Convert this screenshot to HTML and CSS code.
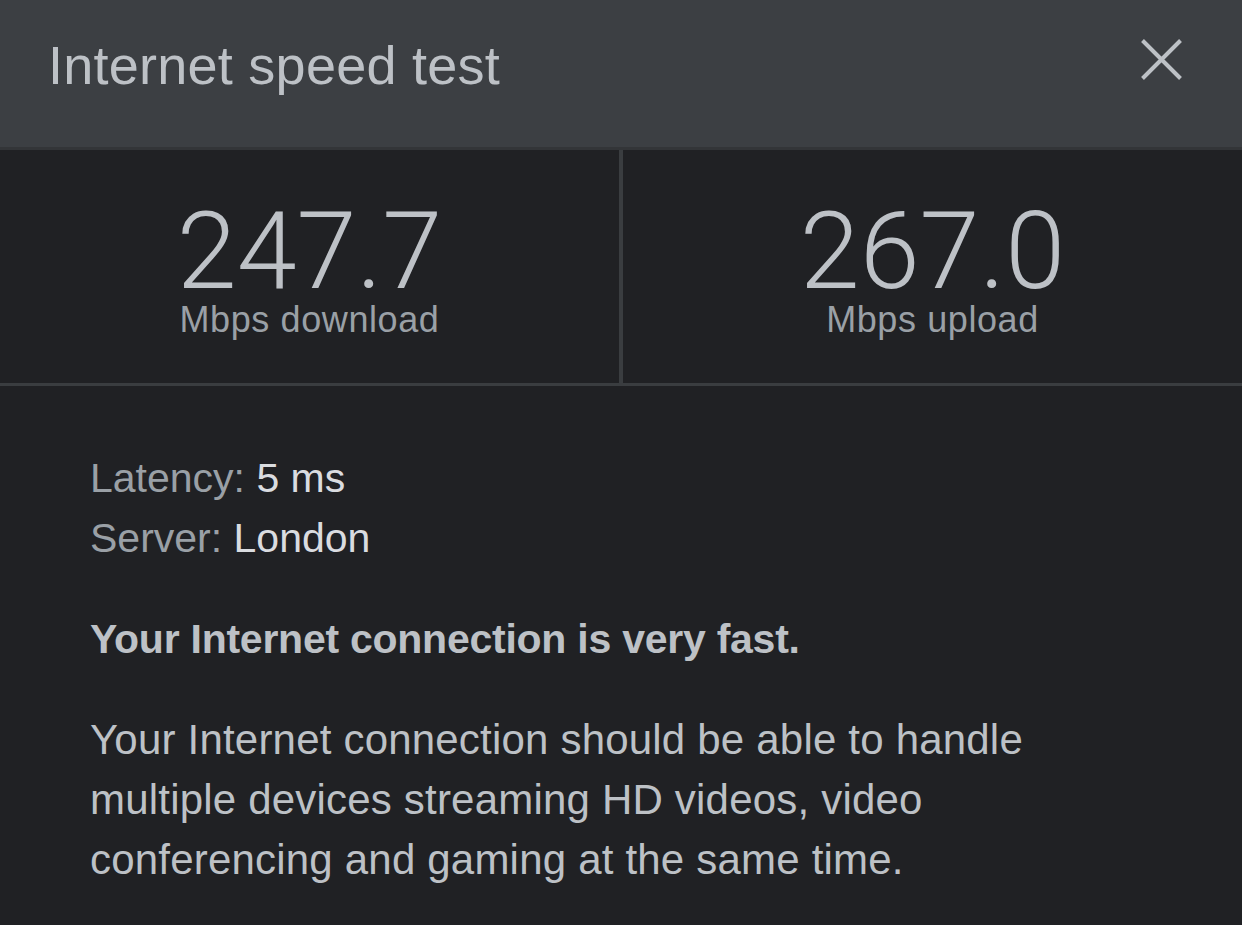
FILE: index.html
```html
<!DOCTYPE html>
<html lang="en">
<head>
<meta charset="utf-8">
<title>Internet speed test</title>
<link rel="stylesheet" href="styles.css">
</head>
<body>
<div class="panel">
  <header class="header">
    <h1 class="title">Internet speed test</h1>
    <button class="close" aria-label="Close">
      <svg width="41" height="41" viewBox="0 0 41 41"><path d="M1.5 1.5 L39.5 39.5 M39.5 1.5 L1.5 39.5" stroke="#bdc1c6" stroke-width="4" fill="none"/></svg>
    </button>
  </header>
  <section class="metrics">
    <div class="metric metric-left">
      <div class="value">247.7</div>
      <div class="unit">Mbps download</div>
    </div>
    <div class="metric">
      <div class="value">267.0</div>
      <div class="unit">Mbps upload</div>
    </div>
  </section>
  <section class="details">
    <div class="info">
      <div class="row"><span class="label">Latency:</span> <span class="val">5 ms</span></div>
      <div class="row"><span class="label">Server:</span> <span class="val">London</span></div>
    </div>
    <p class="verdict">Your Internet connection is very fast.</p>
    <p class="desc">Your Internet connection should be able to handle multiple devices streaming HD videos, video conferencing and gaming at the same time.</p>
  </section>
</div>
</body>
</html>
```
FILE: styles.css
```css
html, body {
  margin: 0;
  padding: 0;
  background: #202124;
}
body {
  font-family: "Liberation Sans", Arial, sans-serif;
  color: #bdc1c6;
}
.panel {
  width: 1242px;
  height: 925px;
  overflow: hidden;
}
.header {
  box-sizing: border-box;
  height: 150px;
  background: #3c3f43;
  border-bottom: 3px solid #333538;
  display: flex;
  align-items: flex-start;
  justify-content: space-between;
  padding: 38px 60px 0 48px;
}
.title {
  margin: 0;
  font-size: 54px;
  font-weight: 400;
  letter-spacing: 0.25px;
  color: #bdc1c6;
  line-height: 54px;
}
.close {
  background: none;
  border: 0;
  padding: 0;
  width: 41px;
  height: 41px;
  display: block;
  margin-top: 1px;
}
.close svg { display: block; }
.metrics {
  box-sizing: border-box;
  display: grid;
  grid-template-columns: 623px 1fr;
  height: 236px;
  border-bottom: 3px solid #3a3d40;
}
.metric {
  display: flex;
  flex-direction: column;
  align-items: center;
  padding-top: 56px;
}
.metric-left {
  border-right: 4px solid #3a3d40;
}
.value {
  font-family: "Roboto", "Liberation Sans", sans-serif;
  font-weight: 300;
  font-size: 108px;
  line-height: 90px;
  color: #bdc1c6;
}
.unit {
  font-size: 36px;
  letter-spacing: 0.6px;
  line-height: 40px;
  color: #9aa0a6;
  margin-top: 4px;
}
.details {
  padding: 62px 90px 0 90px;
}
.row {
  font-size: 41px;
  line-height: 60px;
}
.label { color: #9aa0a6; }
.val { color: #dadce0; }
.verdict {
  margin: 41px 0 0;
  font-size: 41px;
  font-weight: 700;
  letter-spacing: -0.25px;
  line-height: 60px;
  color: #bdc1c6;
}
.desc {
  margin: 41px 0 0;
  font-size: 42px;
  letter-spacing: 0.2px;
  line-height: 60px;
  color: #bdc1c6;
  max-width: 1000px;
}
```
